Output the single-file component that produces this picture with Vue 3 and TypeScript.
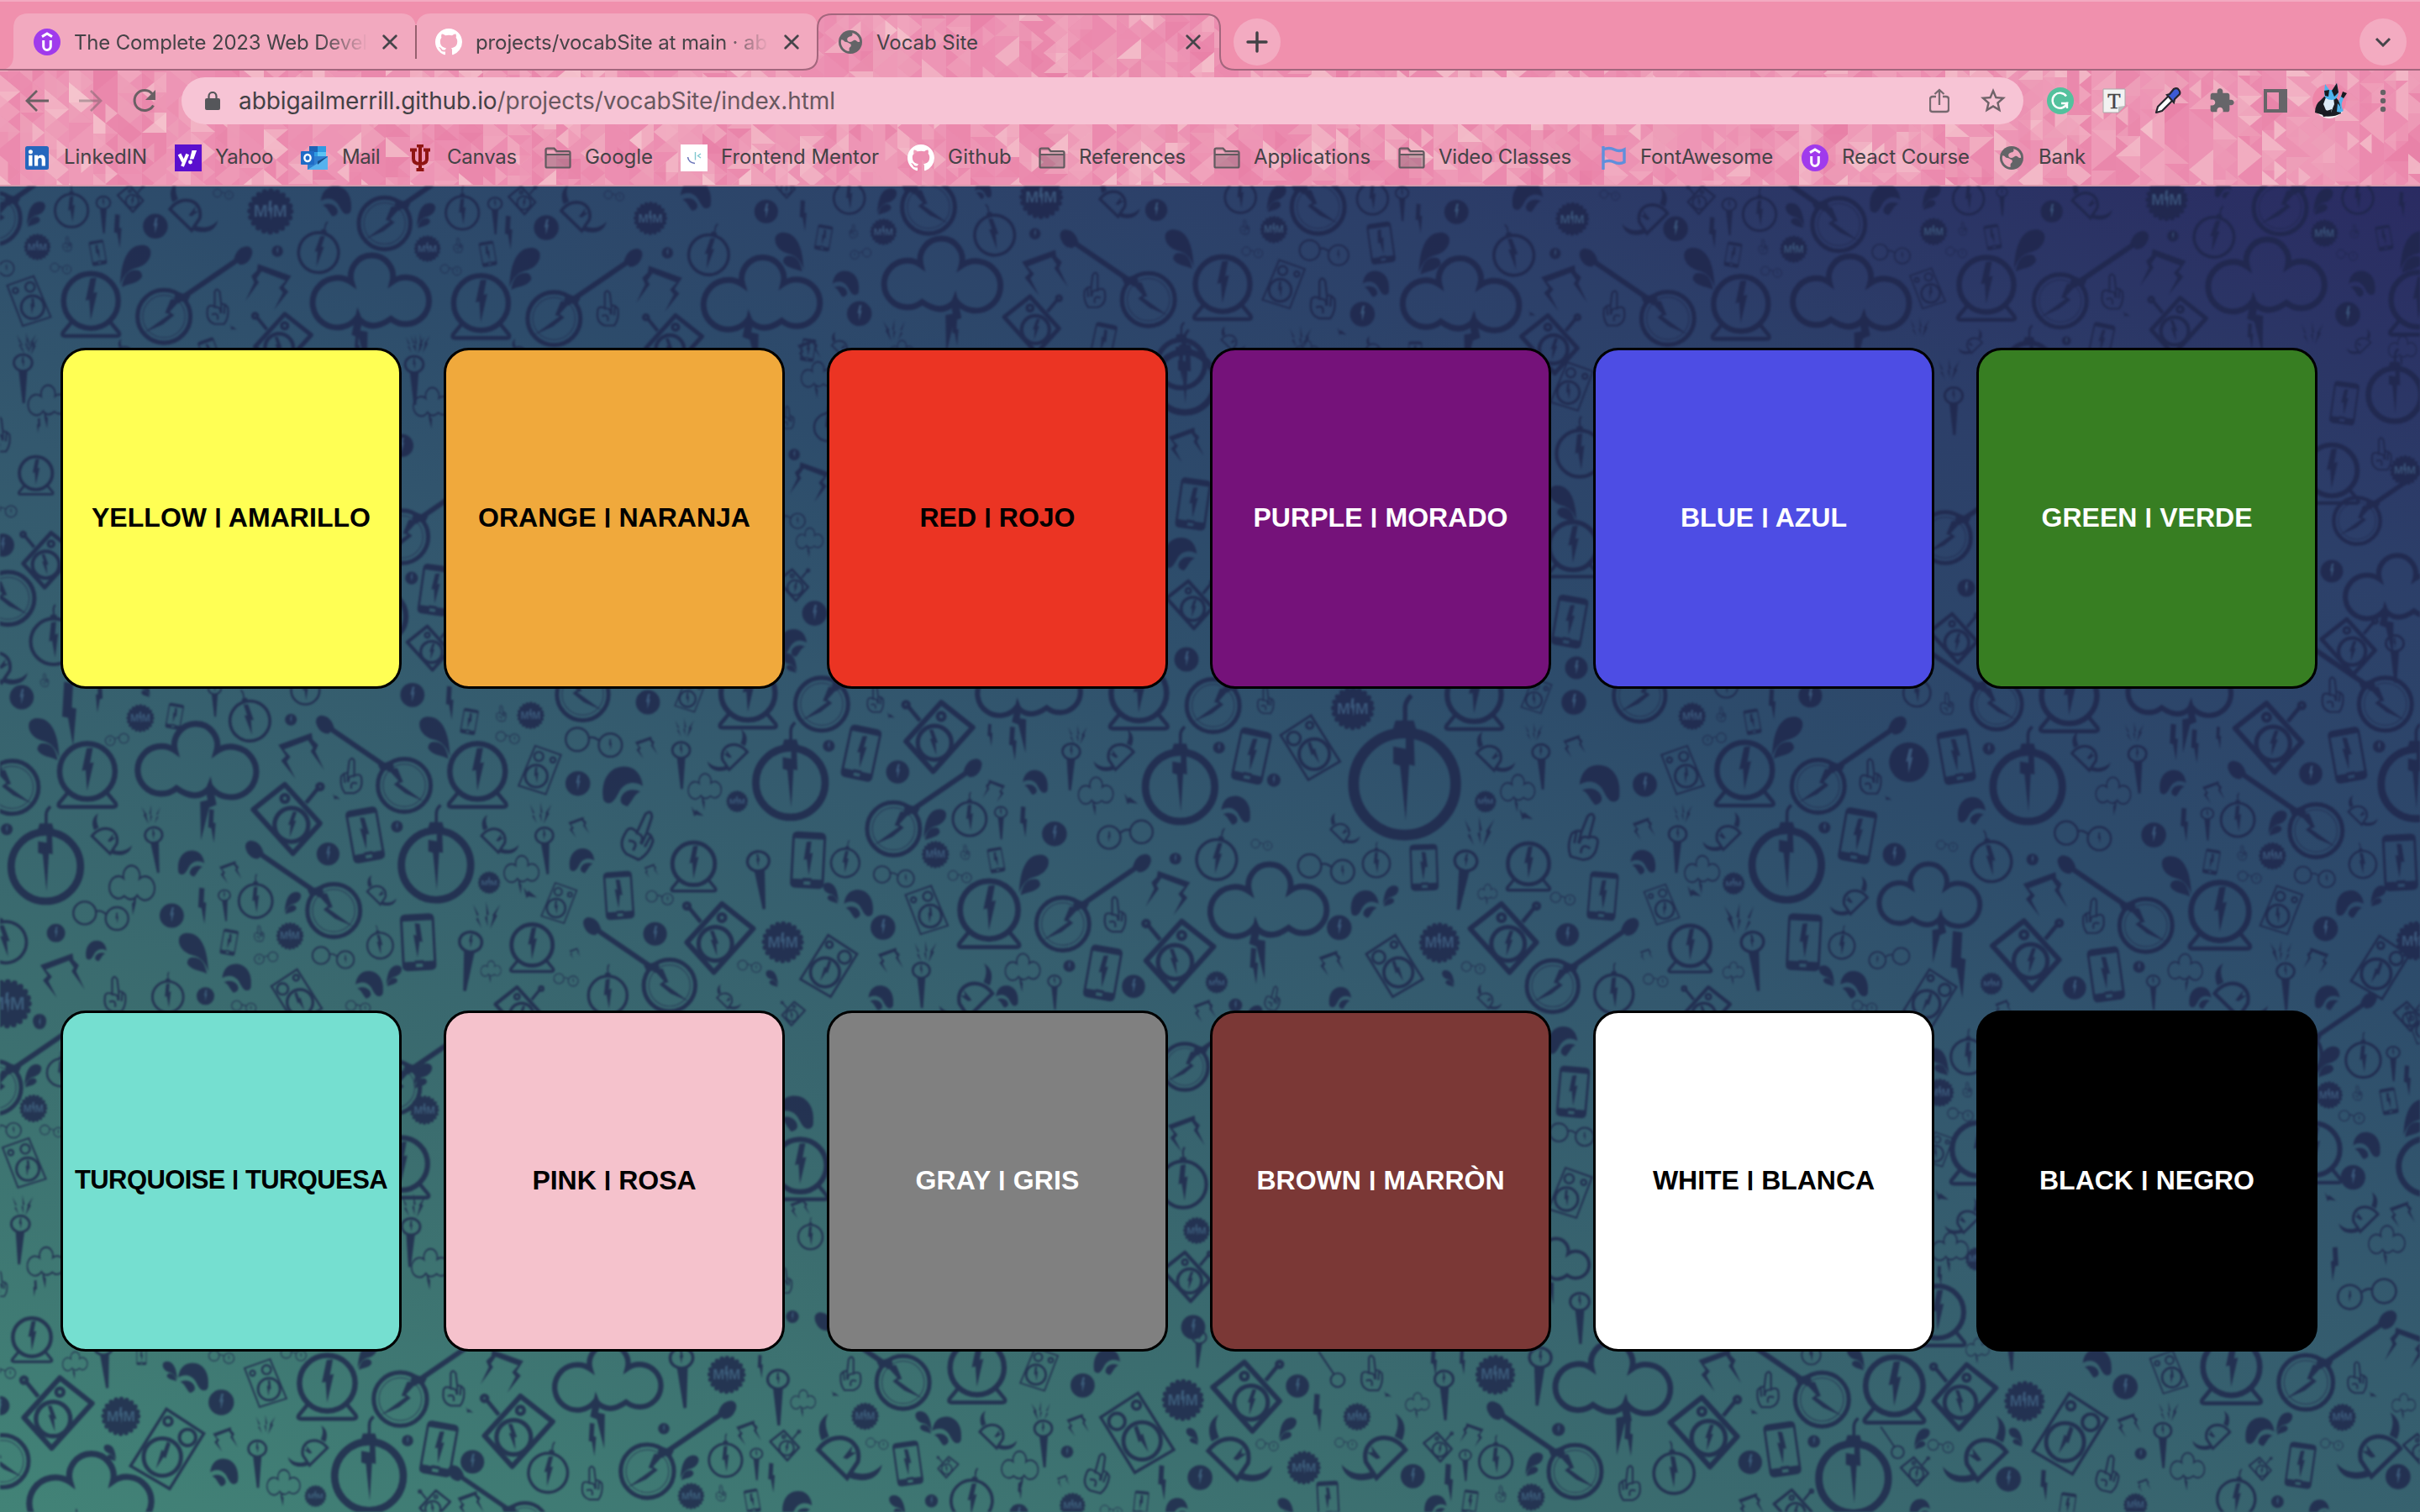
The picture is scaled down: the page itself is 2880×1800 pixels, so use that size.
<script setup lang="ts">
import type { Directive } from 'vue'

interface Bookmark { label: string; icon: string; width: number; gap: number; text: number; size: number }
interface Card { first: string; second: string; bg: string; fg: string; text: number }
interface Doodle { id: string; transform: string }
interface Band { ox: number; oy: number; sx: number; sy: number; from: number; to: number; items: string }

/* Spreads a label over the given width by adjusting its tracking. */
const vFit: Directive<HTMLElement, number> = {
  mounted(el, { value }) {
    const count = (el.textContent ?? '').length
    const natural = el.getBoundingClientRect().width
    el.style.letterSpacing = `${((value - natural) / count).toFixed(3)}px`
  },
}

const bookmarks: Bookmark[] = [
  { label: 'LinkedIN', icon: 'linkedin', size: 28, width: 178, gap: 18, text: 99 },
  { label: 'Yahoo', icon: 'yahoo', size: 32, width: 150, gap: 16, text: 69 },
  { label: 'Mail', icon: 'outlook', size: 32, width: 128, gap: 17, text: 45 },
  { label: 'Canvas', icon: 'trident', size: 28, width: 162, gap: 18, text: 83 },
  { label: 'Google', icon: 'folder', size: 32, width: 162, gap: 16, text: 81 },
  { label: 'Frontend Mentor', icon: 'mentor', size: 32, width: 270, gap: 16, text: 188 },
  { label: 'Github', icon: 'github', size: 32, width: 156, gap: 16, text: 76 },
  { label: 'References', icon: 'folder', size: 32, width: 208, gap: 16, text: 127 },
  { label: 'Applications', icon: 'folder', size: 32, width: 220, gap: 16, text: 139 },
  { label: 'Video Classes', icon: 'folder', size: 32, width: 242, gap: 16, text: 158 },
  { label: 'FontAwesome', icon: 'flag', size: 30, width: 238, gap: 16, text: 158 },
  { label: 'React Course', icon: 'udemy', size: 32, width: 236, gap: 16, text: 152 },
  { label: 'Bank', icon: 'globe', size: 28, width: 120, gap: 18, text: 56 },
]

const rows: Card[][] = [
  [
    { first: 'YELLOW', second: 'AMARILLO', bg: '#ffff54', fg: '#000', text: 332 },
    { first: 'ORANGE', second: 'NARANJA', bg: '#f0a93c', fg: '#000', text: 324 },
    { first: 'RED', second: 'ROJO', bg: '#eb3423', fg: '#000', text: 185 },
    { first: 'PURPLE', second: 'MORADO', bg: '#75127a', fg: '#fff', text: 303 },
    { first: 'BLUE', second: 'AZUL', bg: '#4d4de4', fg: '#fff', text: 198 },
    { first: 'GREEN', second: 'VERDE', bg: '#377e22', fg: '#fff', text: 251 },
  ],
  [
    { first: 'TURQUOISE', second: 'TURQUESA', bg: '#75dfd0', fg: '#000', text: 372 },
    { first: 'PINK', second: 'ROSA', bg: '#f5c2cc', fg: '#000', text: 195 },
    { first: 'GRAY', second: 'GRIS', bg: '#808080', fg: '#fff', text: 195 },
    { first: 'BROWN', second: 'MARRÒN', bg: '#7b3836', fg: '#fff', text: 295 },
    { first: 'WHITE', second: 'BLANCA', bg: '#fff', fg: '#000', text: 264 },
    { first: 'BLACK', second: 'NEGRO', bg: '#000', fg: '#fff', text: 256 },
  ],
]

/* Mosaic of the browser theme: vertical ribbons folded into chevrons. */
let seed = 7
const rand = () => {
  seed = (seed * 16807) % 2147483647
  return seed / 2147483647
}
const ribbonTints = ['#ea87ac', '#eb8cb0', '#ed96b5', '#ee9cb9', '#e983a9', '#ec92b3']
const foldTints = ['#e87fa6', '#ea88ac', '#ed98b6', '#f0a5bd', '#f1acc1', '#ef9fba', '#eb8db0', '#f3bac8', '#eda0b9', '#f5c6cf']
const pick = (list: string[]) => list[Math.floor(rand() * list.length)]
const mosaic: { points: string; fill: string }[] = []
for (let x = -5; x < 2880; x += 29) {
  mosaic.push({ points: `${x},0 ${x + 29},0 ${x + 29},222 ${x},222`, fill: pick(ribbonTints) })
  const right = rand() > 0.35
  const near = right ? x : x + 29
  const far = right ? x + 29 : x
  const mid = (near + far) / 2
  for (let y = -40 + Math.floor(rand() * 20); y < 230; y += 24) {
    if (rand() > 0.3) mosaic.push({ points: `${near},${y} ${far},${y + 24} ${near},${y + 48}`, fill: pick(foldTints) })
    if (rand() > 0.45) mosaic.push({ points: `${near},${y} ${mid},${y + 12} ${far},${y + 24} ${near},${y + 24}`, fill: pick(foldTints) })
    if (rand() > 0.6) mosaic.push({ points: `${far},${y + 24} ${mid},${y + 36} ${mid},${y + 12}`, fill: pick(foldTints) })
  }
}

/* Doodle bands: origin, units per pixel on both axes, horizontal extent in pixels, then "kind x y height [flip] [angle]". */
const bands: Band[] = [
  {
    ox: 0, oy: 220, sx: 1.0814, sy: 3, from: -200, to: 1442,
    items: `banjo -7 120 200;comma 45 105 90 -1;bombt 92 92 128;mic 133 108 130;bolt 152 165 120;disc 200 148 92;helmet 248 80 180;amp 168 50 100;
    glasses 287 32 32;badge 348 95 165;swirl 432 60 110 -1;bombt 410 242 155 1 14;banjo 495 138 200;watch 231 273 145 1 10;disc 357 237 42;banjo 211 470 205;
    comma 172 290 150 -1;badge 48 222 95;phone 126 243 88 1 -10;hand 87 210 55;glasses 78 298 34;glasses -6 290 60;ball 117 415 212;speaker 38 415 185 -1;
    hand 281 435 130;zig 345 365 165 -1;cloud 475 385 260;amp 364 565 220 -1;sparks 37 575 70;sparks 535 570 70;tick 300 510 22;phone 270 600 100 -1 20;bolt 460 580 80;
    comma 547 110 90 -1;bombt 595 100 128;mic 637 112 130;bolt 655 170 120;disc 703 153 92;helmet 750 86 170;amp 672 56 105;glasses 790 38 32;badge 837 120 120;
    swirl 895 40 110 -1;bombt 912 250 155 1 14;badge 550 228 95;hand 590 215 55;phone 628 247 88 1 -10;glasses 580 303 34;ball 619 422 212;watch 733 282 145 1 10;
    disc 859 243 42;banjo 713 478 205;comma 673 300 150 -1;hand 783 440 130;zig 848 372 165 -1;cloud 978 392 260;amp 867 570 220 -1;disc 986 95 88;
    comma 1018 240 140;swirl 1088 355 95 -1;disc 1106 460 92;phone 1060 190 90 -1 -10;hand 1098 165 50 -1;badge 1137 168 95;glasses 1108 245 34 -1;bombt 1093 48 120;
    comma 1140 60 95 -1;banjo 1195 80 205 -1;badge 1340 45 155;bombt 1280 180 155 -1 14;disc 1332 175 42;banjo 1478 410 205 -1;cloud 1215 325 260 -1;zig 1345 315 165;
    hand 1408 375 130 -1;amp 1328 500 215;watch 1457 215 145 -1 10;comma 1520 230 140;sparks 1150 520 80 -1;bolt 1230 525 100;helmet 1440 45 150 1;disc 1488 90 82;
    bolt 1034 110 110;phone 1420 560 130 -1 -12;bombx 1520 640 190;helmet 1085 570 90;puff 1160 590 70;phone 1040 590 80 1 8;helmet 165 590 80;helmet 672 590 80;swirl 1265 22 60 -1;amp 1010 10 80`,
  },
  {
    ox: 1430, oy: 220, sx: 1.0814, sy: 3, from: 1442, to: 3000,
    items: `bombt 50 45 120;comma 95 50 95 -1;banjo 150 80 205 -1;bombt 220 50 120;mic 258 70 120;bolt 280 120 105;disc 328 97 90;swirl 420 45 110;badge 477 122 120;
    helmet 572 95 170 -1;amp 643 55 105 -1;disc 610 157 92;glasses 525 36 32;mic 679 115 130;bombt 718 105 128;bolt 658 170 110;comma 765 110 90;banjo 820 142 205 -1;
    swirl 880 55 110;badge 942 167 98;hand 723 220 55;phone 684 250 88 -1 -10;badge 762 230 98;glasses 733 310 34;bombt 402 252 155 -1 14;disc 455 245 42;
    hand 56 150 55;badge 93 160 98;glasses 65 240 34;glasses 157 240 80;phone 231 208 145 1 -8;comma 297 245 150 -1;ball 27 355 212;speaker 105 355 180;
    hand 157 405 150;swirl 224 355 95 -1;disc 207 462 92;cloud 336 395 260 -1;zig 467 370 165;banjo 600 477 205 -1;watch 580 283 145 -1 10;hand 530 440 130 -1;
    comma 643 300 150;ball 694 425 212;cloud 838 388 260 -1;amp 448 570 220;tick 425 460 22;glasses 887 245 62;speaker 935 370 150 -1;ball 1010 357 212;banjo 1105 415 205;
    watch 1123 218 145 1 10;disc 1250 183 42;comma 1063 235 150 -1;bombt 987 50 120;comma 938 45 90 -1;disc 1094 95 82;helmet 1145 50 150;badge 1242 55 150;
    bombt 1303 187 155 1 14;banjo 1388 82 205;swirl 1315 20 60;comma 1442 60 95 -1;hand 1173 380 130;zig 1237 312 165 -1;cloud 1368 328 260;amp 1257 505 215 -1;
    badge 1445 173 98;hand 980 155 50;phone 1018 187 88 1 -10;glasses 971 240 34;bombt 1488 48 120;phone 1522 190 88 1 -10;glasses 1474 250 34;hand 1484 165 50;
    swirl 1493 355 95 -1;disc 1475 463 92;ball 1566 410 212;comma 1560 240 150 -1;sparks 1430 530 80;phone 1158 560 130 1 12;disc 1113 557 34;bombx 1065 650 190;
    sparks 128 545 80;helmet 40 550 90;puff 135 590 70;tick 180 525 30;helmet 225 580 80;phone 275 600 80;sparks 925 510 70;helmet 990 560 90 -1;bolt 1350 540 90;helmet 1490 560 90 -1;puff 1545 580 80;bolt 1545 70 90;mic 1030 60 100;tick 1190 462 22`,
  },
  {
    ox: 0, oy: 800, sx: 1.742, sy: 3, from: -200, to: 898,
    items: `disc 45 90 90;hand 93 28 50;bolt 145 150 230;bolt 205 90 110 -1;comma 95 240 150;watch -5 215 145;banjo 25 412 205 -1;ball 181 355 215;badge 291 165 100;
    phone 362 158 90 -1 -10;glasses 243 240 38 -1;cloud 412 320 265 -1;bombt 518 175 155 -1 14;disc 603 170 44;zig 625 300 165;banjo 838 405 205 -1;watch 805 208 150 -1 10;
    bombt 633 65 110;hand 727 370 130 -1;amp 595 525 262;tick 697 446 24;phone 757 582 190 -1 10;disc 680 650 85;bombx 95 695 275;disc 14 562 44;helmet 230 580 150;
    sparks 312 510 70 -1;mic 323 637 162 -1 8;swirl 397 685 95;bolt 440 550 120;puff 275 755 130 -1;zig 478 715 80;banjo 692 852 205 -1;bombt 530 818 130;mic 467 835 110 -1 5;
    bolt 420 835 130;comma 605 825 80 -1;glasses 208 868 90;disc 356 870 90;bombt 12 965 160 -1 14;disc 116 932 68;swirl 200 997 75;watch 307 995 150 -1 10;comma 405 1005 145;
    badge 601 943 98;hand 538 933 60;phone 475 965 90 -1 -10;glasses 552 1020 38 -1;glasses 690 1018 68;bombt 788 977 100 -1 10;zig 130 1085 160;badge 15 1185 175;
    hand 240 1150 130;bombt 348 1160 120;disc 426 1157 66;swirl 490 1095 105 -1;speakerb 615 1160 200;swirl 765 1118 100 -1;comma 815 1085 75 -1;watch 873 1185 130 1 8;
    phone 867 965 202 -1 3;helmet 790 780 110;bombx 904 690 275;disc 823 552 44;helmet 1035 580 140;sparks 1122 505 80;mic 1132 640 165 -1 6;puff 1080 705 100;
    zig 1200 555 75;swirl 1207 675 90;badge 1014 752 80;tick 1098 790 44;ball 990 355 215;comma 905 235 150;disc 855 82 90;phone 973 177 90 -1 -10;hand 1040 147 60;
    badge 1100 155 98;banjo 1208 80 200 -1;disc 1343 108 90;speaker 1430 80 130;glasses 1052 233 38;speaker 1118 350 180;glasses 1230 248 92;disc 1198 398 92;zig 1340 270 80;
    swirl 1292 410 145;hand 1330 580 180 1 25;sparks 1420 200 70;mic 1412 335 165;helmet 1510 280 150 -1;puff 1460 410 95;badge 1528 462 78;ball 1438 685 165;
    phone 1283 798 170 -1 4;speaker 1158 825 150;glasses 1367 805 44;zig 1350 710 50;banjo 1388 1120 200 -1;ball 1103 975 160;mic 970 1035 210 1 8;sparks 1010 870 100;
    amp 1492 950 260 -1;disc 1358 935 88;puff 1017 1060 58;glasses 1173 1098 40;zig 1192 1005 40;bombt 1260 1155 150;amp 1075 1210 180;helmet 1510 1160 90;tick 1445 500 40;
    bolt 933 110 120;comma 300 60 60;mic 445 100 120;glasses 505 1195 40;glasses 742 1195 40;disc 82 1245 50`,
  },
  {
    ox: 860, oy: 800, sx: 1.4255, sy: 3, from: 884, to: 1925,
    items: `ball 43 75 210;banjo 168 115 205;hand 260 95 100;amp 367 232 262 -1;tick 285 155 24;cloud 517 45 230;ball 706 75 215;banjo 832 120 205;hand 922 100 100;badge 1069 130 155;
    ball 1275 80 210;speaker 1380 85 130;disc 1444 108 92;bombx 115 395 275;disc 180 264 44;phone 235 290 190 1 12;disc 297 357 86;bolt 454 225 80;bolt 493 255 120;
    banjo 290 560 205;bombt 419 525 130;swirl 530 395 90 -1;zig 460 425 80 -1;sparks 603 225 70;mic 590 340 165 1 3;helmet 665 280 150 -1;puff 632 425 100;tick 692 455 44;
    glasses 684 578 90 -1;comma 358 545 110 -1;mic 472 540 115;bolt 511 535 110;disc 563 578 92;badge 361 652 98;hand 412 642 55;phone 464 672 88 1 -10;
    glasses 402 730 38;bombt 208 682 110 1 8;phone 145 672 200 1 3;glasses 290 728 66;comma 525 725 145 -1;watch 601 703 150 1 10;banjo 577 900 205;disc 768 667 44;
    bombx 776 410 275;phone 897 300 190 1 12;disc 842 270 44;speakerb 997 270 235;disc 935 386 50;swirl 870 495 105 -1;bombt 838 670 155 1 12;watch 967 530 150 1 8;glasses 914 616 34;
    bombx 1157 400 405;helmet 1055 558 110;cloud 923 820 260;zig 755 790 160 -1;hand 667 865 130;glasses 1023 700 92;bombt 1109 685 105;phone 1190 698 165 -1 2;sparks 1285 570 110;
    mic 1255 745 210 1 10;ball 1367 685 160;hand 1462 585 175 -1 -15;badge 1294 463 78;puff 1348 415 98;helmet 1310 285 145;sparks 1377 215 65;mic 1390 340 160 -1 4;zig 1445 265 80;
    glasses 1520 255 90 -1;swirl 1487 405 145 -1;tick 1362 510 44;amp 775 1015 265 -1;phone 645 1075 190 1 10;disc 588 1050 44;disc 697 1123 86;badge 838 1108 80;bolt 902 1050 130;
    puff 508 1055 100;ball 452 850 225;speaker 347 850 180 -1;mic 65 745 205 -1 8;swirl 230 830 105 -1;comma 185 790 75;watch 143 848 90;disc 272 912 92;badge 102 965 150;
    speakerb 180 1050 225 -1;zig 285 1030 90;comma 85 1095 60;sparks 345 1000 80;mic 337 1120 160;helmet 415 1140 200 -1;swirl 268 1165 90 -1;swirl 482 1160 80 -1;mic 563 1145 120;
    hand 935 1165 90 1 15;zig 1033 1040 90;swirl 1048 1165 80;speakerb 1140 1050 225;badge 1216 967 145;swirl 1090 830 100;comma 1132 800 75 -1;watch 1174 850 90;
    disc 1046 913 92;comma 1232 1095 60;puff 1297 785 55;glasses 1425 808 40;phone 1493 800 170 1 5;amp 1325 950 260;banjo 1408 1122 200;disc 1433 938 86;bombt 1512 1150 150;
    helmet 1300 1160 90;glasses 45 1050 38;glasses 1273 1055 38;amp 120 1220 90 -1;disc 870 1190 50;zig 818 1210 80`,
  },
  {
    ox: 1900, oy: 800, sx: 1.6, sy: 3, from: 1925, to: 3000,
    items: `banjo 82 85 200 1;badge 182 158 98;hand 238 150 55;phone 297 178 88 1 -10;bolt 335 115 110;disc 407 85 88;bombt 247 50 90;bombt 610 75 105;hand 668 112 80;banjo 762 115 195 -1;
    ball 900 85 215;cloud 1113 45 230 -1;amp 1280 235 262;hand 1403 80 130;banjo 1502 115 205 -1;speaker 165 350 180 -1;glasses 225 238 38 -1;ball 282 350 215;
    comma 360 235 150 -1;watch 452 210 148 1 10;banjo 422 408 205;disc 595 322 148;hand 523 372 130;phone 685 302 190 -1 10;disc 747 274 46;bombx 821 410 275;helmet 940 285 145;
    sparks 1025 215 70;mic 1032 350 168 -1 4;bolt 1100 250 130;bolt 1140 265 120;bolt 1185 235 80;disc 1360 363 86;phone 1430 297 190 -1 10;disc 1490 266 46;bombx 1560 400 275;
    puff 985 425 100 -1;swirl 1098 398 95;zig 1175 430 80;banjo 1370 567 205 -1;bombt 1221 528 130;mic 1163 545 115;bolt 1120 545 120;comma 1295 540 90 -1;helmet 1458 495 110;
    disc 92 402 90;sparks 165 505 70;zig 90 560 80;mic 153 635 165 1 3;helmet 240 570 140 -1;puff 200 705 100;swirl 88 680 90 -1;badge 261 755 80;
    bombx 362 690 275;disc 434 556 44;phone 497 585 190 1 10;disc 567 652 86;watch 608 535 150 -1 8;swirl 715 497 100;glasses 667 620 34;bombt 752 677 155 -1 12;disc 830 670 44;
    glasses 925 582 92;disc 1061 582 92;badge 1287 657 98;hand 1230 645 55;phone 1171 678 88 -1 -10;glasses 1243 732 38;bombt 1459 687 105 -1 8;phone 1530 680 200 -1 3;
    glasses 1367 730 66;comma 1108 730 145;watch 1018 708 150 -1 8;banjo 1046 905 205 -1;cloud 637 800 225 -1;zig 855 795 160;hand 945 870 130 -1;amp 818 1012 262;
    bolt 690 1045 240;ball 1187 855 225;speaker 1303 850 180;disc 1388 917 92;swirl 1435 830 100;comma 1487 800 75 -1;watch 1530 852 90;phone 395 965 202 1 3;sparks 270 880 110 -1;
    mic 302 1035 210 -1 8;ball 178 978 158;bombt 467 978 100 1 6;helmet 482 800 140 -1;glasses 558 1020 66 -1;swirl 490 1118 100 -1;comma 440 1085 75;watch 393 1190 130;
    speakerb 635 1165 210 -1;badge 752 1113 80;phone 970 1080 190 -1 8;disc 910 1128 86;disc 1033 1053 44;puff 1122 1055 98 -1;mic 1060 1145 120;sparks 1302 1000 80 -1;
    mic 1312 1125 165;zig 1370 1030 90 -1;helmet 1225 1140 200;swirl 1150 1165 80;swirl 1392 1165 90;speakerb 1492 1055 230 -1;badge 1560 960 140;
    speaker 125 830 150 -1;glasses 112 1100 40;zig 95 1010 45;puff 260 1065 60;amp 210 1210 180 -1;tick 185 785 44;tick 555 450 22;
    glasses 510 1195 40;zig 775 1200 60;amp 1545 1230 110`,
  },
  {
    ox: 0, oy: 220, sx: 1.568, sy: 2.529, from: -200, to: 3000,
    items: `sparks 50 475 60;mic 43 585 145;puff 88 650 95;bolt 72 725 45 -1;hand 0 750 110;ball 67 868 108;glasses 5 978 38;disc 5 1085 72;amp 92 1130 175 -1;banjo 15 1245 172 -1;
    bombt 100 1375 150;helmet 5 1430 150;sparks 785 478 60;mic 773 590 145;puff 805 655 90;disc 750 785 72;watch 783 893 125;banjo 750 1060 172;
    disc 768 1184 40;phone 812 1220 150 1 8;bombx 710 1300 170;amp 800 1395 140;
    zig 1510 500 70;puff 1525 572 80;hand 1470 700 70;bombt 1545 730 90;disc 1482 812 36;zig 1510 895 120 -1;glasses 1468 1005 50;puff 1510 1065 65;amp 1480 1205 100;disc 1520 1290 78;swirl 1480 1380 85;comma 1475 1440 60`,
  },
  {
    ox: 0, oy: 0, sx: 1, sy: 1, from: -200, to: 3000,
    items: `bombx 1410 455 80;zig 1412 530 42;phone 1420 600 60 1 8;swirl 1405 660 40;amp 1416 720 60;disc 1412 785 30;
    speaker 1870 460 60;bombt 1880 540 60;comma 1862 600 44;ball 1872 650 62;phone 1868 740 60 1 10;disc 1876 795 28;
    sparks 2320 440 26;mic 2325 490 56;watch 2320 560 54;banjo 2315 640 66;disc 2340 700 22;amp 2325 760 62;
    ball 2775 560 66;bombx 2850 470 70;banjo 2805 620 60;badge 2862 560 36;phone 2790 480 50 1 8;cloud 2850 700 76;disc 2775 680 28;amp 2795 770 70;mic 2850 785 56;hand 2835 540 40;
    banjo 1410 1270 60;zig 1412 1350 44;bombt 1408 1410 60;badge 1424 1465 32;amp 1412 1520 62;disc 1420 1580 30;
    swirl 1860 1240 36;phone 1872 1300 60 1 5;glasses 1870 1350 24;speaker 1868 1420 62;cloud 1850 1500 50;mic 1880 1570 60`,
  },
  {
    ox: 0, oy: 1180, sx: 1.633, sy: 2.529, from: -200, to: 975,
    items: `disc 77 95 40;banjo -10 290 172;comma 62 255 70 -1;bombt 118 245 90;badge 65 353 84;glasses 5 412 50;glasses 100 420 32;speaker 48 517 155 -1;sparks 45 645 65;mic 38 750 145 1 3;
    puff 88 815 90;bolt 68 895 50 -1;ball 62 1042 125;hand 0 880 80;comma 820 255 75 -1;banjo 765 290 172;badge 825 358 88;ball 780 520 172;sparks 805 645 75;mic 797 758 145 1 3;puff 835 820 90;watch 805 1060 125;
    swirl 1545 370 110 -1;ball 1555 525 172;zig 1555 655 60;bombt 1575 740 80;hand 1525 870 80;disc 1540 980 40;
    puff 145 1115 60;mic 205 1120 150 -1 6;phone 275 1100 50;watch 282 1185 78;comma 332 1145 60;swirl 375 1165 92 -1;disc 430 1238 80;speaker 517 1180 150 -1;ball 636 1180 182;
    comma 712 1100 80 -1;banjo 778 1228 174;hand 883 1195 110;zig 975 1145 130 -1;cloud 1178 1165 200;mic 1328 1165 180 -1 5;badge 1412 1155 115;amp 112 1270 225 -1;badge 235 1280 118;
    speakerb 325 1378 245 -1;zig 438 1350 75;sparks 517 1305 60;helmet 600 1370 125 -1;tick 912 1262 20;phone 853 1378 160 1 10;disc 792 1353 36;disc 918 1417 74;amp 1007 1325 225 -1;
    bolt 1152 1350 100;mic 1512 1225 165;bombx 717 1460 230;mic 500 1425 140;puff 550 1480 80;swirl 435 1450 85 -1;badge 613 1520 66;banjo 5 1415 170 -1;comma 215 1390 50;
    cloud 172 1510 230;watch 370 1540 100;bombt 1065 1450 128 1 10;hand 1152 1480 105;banjo 1258 1445 174;disc 1290 1317 36;bombt 1410 1412 108;comma 1338 1435 75 -1;mic 1470 1425 95;
    badge 1343 1520 80;bolt 1500 1465 90;amp 1525 1368 95;zig 1455 1330 75;hand 1402 1510 50;phone 1462 1535 70 1 -10;swirl 1550 1550 90;banjo 1020 1610 150 -1;zig 915 1545 80;
    amp 845 1550 100 -1;glasses 430 1100 35;glasses 570 1092 35;bolt 1478 1130 70;disc 0 1248 60;glasses 5 1145 35;puff 1560 1230 60`,
  },
  {
    ox: 900, oy: 1600, sx: 1.568, sy: 3, from: 975, to: 1885,
    items: `hand 175 105 125 -1;banjo 274 137 205 -1;ball 412 85 210;speaker 527 90 160;swirl 655 65 95;watch 751 85 88;mic 825 20 130 1 5;disc 609 148 90;
    badge 796 200 150;speakerb 711 317 290;tick 147 178 24;badge 203 258 98;helmet 172 368 240;swirl 355 312 105 -1;comma 314 280 80;
    helmet 450 308 140;sparks 530 240 70 -1;mic 537 358 165 -1 3;zig 600 290 80;phone 283 427 155 -1 8;puff 493 435 105 -1;disc 580 385 46;
    glasses 225 355 36;amp 358 440 80 -1;hand 640 460 145 1 15;bombt 402 560 160 1 8;watch 145 595 140;disc 327 560 48;badge 590 577 92;zig 573 490 45;bolt 492 525 60;
    amp 915 188 262;disc 1010 150 86;comma 990 305 85 -1;helmet 900 372 240;comma 815 330 60;disc 828 477 92;bolt 758 495 125;badge 1022 442 120;glasses 953 360 36;watch 873 595 130;
    phone 1067 555 130 -1 3;swirl 785 590 80;spoon 1070 90 130 -1;hand 1150 103 130;tick 1178 180 24;puff 1233 208 68;badge 1379 110 142;badge 1121 260 98;mic 1285 185 175 -1 3;
    mic 1460 118 205 1 5;bolt 1048 245 135;bolt 1265 65 100;bolt 1318 65 90;helmet 1155 368 240 -1;amp 1272 368 110;zig 1335 325 85 -1;disc 1497 305 48;banjo 1528 455 205 -1;
    bombt 1380 420 128;mic 1323 435 110;comma 1450 430 85 -1;disc 1225 472 90;bolt 1293 495 135;badge 1446 547 98;hand 1390 533 60;phone 1332 565 85 1 8;bombx 1545 148 200;glasses 1100 355 36;
    watch 1183 590 135;swirl 1268 580 80;phone 718 568 85 -1 -6;glasses 662 595 36;disc 490 605 70;comma 265 580 80;comma 990 590 80`,
  },
  {
    ox: 1880, oy: 1160, sx: 1.568, sy: 2.45, from: 1898, to: 3000,
    items: `bombt 725 240 110;comma 672 255 80;badge 672 345 82;hand 724 335 45;glasses 710 408 34;speaker 668 510 105;ball 745 510 170;tick 675 645 35;helmet 715 705 105 -1;
    puff 690 795 85;bolt 672 880 60;badge 742 830 70;ball 668 985 165;puff 742 1088 55;banjo 1340 235 150;bombt 1462 250 110;mic 1518 262 100;bolt 1545 310 90;comma 1395 255 90 -1;badge 1398 352 80;
    hand 1452 345 45;phone 1510 370 76 1 -10;glasses 1440 415 34;ball 1370 510 165;swirl 1468 500 80 -1;disc 1443 592 75;bombx 1580 560 180;comma 1560 420 110 -1;tick 1400 650 30;
    helmet 1455 695 120 -1;zig 1535 700 75;puff 1505 775 85;bolt 1408 845 100 -1;glasses 1470 930 78 -1;watch 1392 1030 130;banjo 1355 1190 172;speaker 1572 150 110 -1;
    cloud 65 1180 210 -1;zig 262 1155 125;hand 350 1210 108 -1;banjo 452 1240 170 -1;ball 587 1200 182;comma 517 1120 70;amp 718 1232 200 -1;badge 830 1245 118;mic 805 1100 110 -1 4;
    watch 878 1150 75;swirl 965 1135 85 -1;speaker 1100 1160 130 -1;disc 1018 1203 76;ball 1216 1145 180;hand 1452 1175 95;zig 1540 1090 120 -1;tick 1480 1225 20;puff 1537 1250 55;
    amp 232 1335 215;tick 325 1275 20;bolt 92 1350 110;phone 378 1385 155 -1 8;disc 437 1362 38;disc 318 1423 72;bombx 511 1470 225;hand 92 1483 105 -1;bombt 176 1455 128 -1 5;
    spoon 580 1365 95 -1;comma 637 1355 62 -1;glasses 673 1375 34;helmet 740 1385 195 -1;comma 815 1350 55;speakerb 915 1340 240 -1;zig 1025 1315 70;sparks 1100 1275 60;mic 1088 1375 130;
    helmet 1180 1330 115 -1;swirl 1270 1335 85;comma 1313 1310 65 -1;badge 1423 1292 80;helmet 1475 1375 195 -1;glasses 1403 1370 30;phone 1345 1432 130 1 8;disc 1047 1398 36;puff 1133 1435 80;
    amp 625 1450 88;hand 988 1455 110 1 12;disc 800 1472 76;bolt 867 1490 90;amp 1270 1442 70;zig 1053 1490 40;bombt 1225 1530 120 1 8;disc 1527 1465 76;badge 1037 1548 70;phone 910 1550 75 1 8;
    amp 398 1560 120;watch 755 1560 95;zig 320 1550 75;watch 1485 1558 90;swirl 635 1560 60;disc 1302 1538 38;swirl 1380 1562 60;amp 1565 1385 95;bombt 432 1110 60`,
  },
]

const doodles: Doodle[] = bands.flatMap(({ ox, oy, sx, sy, from, to, items }) =>
  items.split(';').flatMap((entry) => {
    const [id, x, y, h, flip = '1', angle = '0'] = entry.trim().split(/\s+/)
    const s = Number(h) / sy / 100
    const px = ox + Number(x) / sx
    const py = oy + Number(y) / sy - 222
    if (px < from || px >= to) return []
    return [{
      id: `#d-${id}`,
      transform: `translate(${px.toFixed(1)} ${py.toFixed(1)}) scale(${(s * Number(flip)).toFixed(3)} ${s.toFixed(3)}) rotate(${angle})`,
    }]
  }),
)
</script>

<template>
  <svg class="defs" aria-hidden="true">
    <defs>
      <symbol id="i-udemy" viewBox="0 0 32 32">
        <circle cx="16" cy="16" r="16" fill="#a03aec" />
        <path d="M10 9.600 16 6l6 3.600M11.700 14v7.200a4.300 4.300 0 0 0 8.600 0V14" fill="none" stroke="#fff" stroke-width="3" />
      </symbol>
      <symbol id="i-github" viewBox="0 0 16 16">
        <path fill="#fff" d="M8 0C3.580 0 0 3.580 0 8c0 3.540 2.290 6.530 5.470 7.590.4.070.55-.17.55-.38 0-.19-.01-.82-.01-1.490-2.010.37-2.530-.49-2.690-.94-.09-.23-.48-.94-.82-1.130-.28-.15-.68-.52-.01-.53.63-.01 1.080.58 1.230.82.72 1.210 1.870.87 2.330.66.07-.52.28-.87.51-1.070-1.780-.2-3.640-.89-3.640-3.950 0-.87.31-1.590.82-2.150-.08-.2-.36-1.020.08-2.120 0 0 .67-.21 2.200.82.64-.18 1.320-.27 2-.27s1.360.09 2 .27c1.530-1.040 2.200-.82 2.200-.82.44 1.100.16 1.920.08 2.120.51.56.82 1.270.82 2.150 0 3.070-1.870 3.750-3.650 3.950.29.25.54.73.54 1.480 0 1.070-.01 1.930-.01 2.200 0 .21.15.46.55.38A8.010 8.010 0 0 0 16 8c0-4.420-3.580-8-8-8" />
      </symbol>
      <symbol id="i-globe" viewBox="2 2 20 20">
        <circle cx="12" cy="12" r="10" fill="#636467" />
        <path fill="#efa6bd" d="M11 19.930c-3.950-.49-7-3.850-7-7.930 0-.62.08-1.210.21-1.790.8-.5 1.800.1 2.500 1.100 1 1.200 2.300.5 3.300 1.200 1.200.9 2.600.8 2.600 2.200 0 1.800-1.600 1.600-1.600 3.200zM9.300 9.800c0-2 1.800-2.400 3.200-2.700 1.300-.3 1.600-1.600 1-2.800 3.500.6 6.200 3.600 6.500 7.300-.9.900-2.300.3-2.900-.6-.8-1.200-2.600-.4-3.600.4-1.300 1-4.200.6-4.200-1.600z" />
      </symbol>
      <symbol id="i-linkedin" viewBox="0 0 28 28">
        <rect width="28" height="28" rx="2.500" fill="#2667bd" />
        <circle cx="6.400" cy="6.800" r="2.500" fill="#fff" />
        <path fill="#fff" d="M4.200 10.800h4.300v12.700H4.200zM11 10.800h4.100v1.800c.8-1.400 2.200-2.200 4-2.200 4 0 4.800 2.700 4.800 6.100v7h-4.200v-6.300c0-1.600-.1-3.300-2.100-3.300s-2.400 1.600-2.400 3.200v6.400H11z" />
      </symbol>
      <symbol id="i-yahoo" viewBox="0 0 32 32">
        <rect width="32" height="32" fill="#5a0fce" />
        <path d="m5.500 11.500 4.600 9M15.200 11.500 9 26" stroke="#fff" stroke-width="4" />
        <path d="M20.500 7h5.600l-3.700 10.500h-4.600z" fill="#fff" />
        <circle cx="18.500" cy="21" r="2.400" fill="#fff" />
      </symbol>
      <symbol id="i-outlook" viewBox="0 0 32 32">
        <path d="M10 2h20v14H10z" fill="#2f9ae3" /><path d="M10 2h10v7H10z" fill="#1d62b5" /><path d="M20 9h10v7H20z" fill="#5bc3f3" />
        <path d="M8 14h24v16H8z" fill="#2f7fd0" /><path d="m8 30 24-15v15z" fill="#55b2ee" /><path d="m20 20 12-6-12 10z" fill="#174a86" />
        <rect x="0" y="8" width="16" height="16" rx="1" fill="#1f6cc7" />
        <ellipse cx="8" cy="16" rx="3.600" ry="4" fill="none" stroke="#fff" stroke-width="2.400" />
      </symbol>
      <symbol id="i-trident" viewBox="0 0 28 32">
        <path d="M10 1.500h8M14 1v30M9.500 30h9M2 6.500h8M18 6.500h8M6 6v11q0 6 8 6t8-6V6" fill="none" stroke="#8f1512" stroke-width="4" />
      </symbol>
      <symbol id="i-folder" viewBox="0 0 32 32">
        <path d="M1.500 26V6.500q0-2 2-2h8l3 3.500h14q2 0 2 2V26q0 1.500-1.500 1.500H3q-1.500 0-1.500-1.500z" fill="#6b6468" fill-opacity=".32" stroke="#625a5f" stroke-width="2.200" />
        <path d="M2 12h28" stroke="#625a5f" stroke-width="2" />
        <path d="M3 7h8l3 3.500h15V11H3z" fill="#f0a8be" />
      </symbol>
      <symbol id="i-mentor" viewBox="0 0 32 32">
        <rect width="32" height="32" fill="#fff" />
        <path d="M8.500 15q1 6.500 8.500 7.500" fill="none" stroke="#6a74b8" stroke-width="1.600" />
        <path d="M17.500 9v9.500M24 11l-3.500 2.500L24 16" fill="none" stroke="#7fc7cf" stroke-width="1.400" />
      </symbol>
      <symbol id="i-flag" viewBox="0 0 30 28">
        <path d="M2 1v26M2 4q7-3 13 0t12 0v15q-6 3-12 0t-13 0" fill="none" stroke="#5f8fdc" stroke-width="3.400" stroke-linecap="round" />
      </symbol>
      <symbol id="i-close" viewBox="0 0 16 16"><path d="m1.500 1.500 13 13m0-13-13 13" stroke="#45454a" stroke-width="2.400" stroke-linecap="round" /></symbol>

      <polygon id="d-zap" points="-5,-38 5,-40 3,-14 9,-16 3,32 -3,-2 -9,0" />
      <g id="d-bombx">
        <circle r="45" fill="none" stroke="currentColor" stroke-width="9.500" />
        <path d="M-11-46-8-56H8L11-46z" />
        <path d="M0-54C2-64-3-70 6-78" fill="none" stroke="currentColor" stroke-width="4" />
        <polygon points="1,-44 8,-44 9,-16 4,-17 1,32 -4,-16 -10,-18 -10,-33 1,-31" />
      </g>
      <g id="d-bombt">
        <circle r="46" fill="none" stroke="currentColor" stroke-width="7" />
        <path d="M-7-46-6-54H6L7-46z" />
        <path d="M0-52C2-60-4-64 3-74" fill="none" stroke="currentColor" stroke-width="3.500" />
        <use href="#d-zap" />
      </g>
      <g id="d-ball">
        <circle r="46" fill="none" stroke="currentColor" stroke-width="9" />
        <path d="M-33 36-47 53q-3 6 4 6h86q7 0 4-6L33 36" fill="none" stroke="currentColor" stroke-width="6.500" />
        <use href="#d-zap" transform="rotate(6)" />
      </g>
      <g id="d-banjo">
        <circle r="46" fill="none" stroke="currentColor" stroke-width="7.500" />
        <circle r="37" fill="none" stroke="currentColor" stroke-width="1.800" opacity=".7" />
        <path d="M22-26 136-104" stroke="currentColor" stroke-width="9" />
        <path d="M122-100q6-22 24-22 12 4 6 18-6 14-20 14zM20-44l26 8-6 12-22-6z" />
        <polygon points="30,-30 12,-30 2,-6 10,-4 -34,28 -2,14 18,-2 10,-8" />
      </g>
      <g id="d-cloud">
        <path d="M-24-14A34 34 0 1 0-16 34Q2 56 30 36A32 32 0 1 0 32-15A29 29 0 1 0-24-14z" fill="none" stroke="currentColor" stroke-width="8" />
        <polygon points="-16,20 -9,38 -12,52 -2,54 -3,106 -14,62 -24,58" />
      </g>
      <g id="d-puff">
        <path d="M-24-14A34 34 0 1 0-16 34Q2 56 30 36A32 32 0 1 0 32-15A29 29 0 1 0-24-14z" fill="none" stroke="currentColor" stroke-width="6" transform="scale(.78 .96)" />
        <polygon points="-10,36 -4,38 -2,52 2,54 0,88 -8,56" />
      </g>
      <g id="d-amp" fill="none" stroke="currentColor">
        <path d="M-3-47 45 6 8 47-46-13z" stroke-width="7" stroke-linejoin="round" />
        <circle cx="6" cy="8" r="23" stroke-width="6" /><circle cx="-3" cy="-28" r="5" stroke-width="5" />
        <path d="M26-22 44-44" stroke-width="5.500" /><circle cx="45" cy="-44" r="4" stroke-width="5" />
        <use href="#d-zap" transform="translate(6 9) rotate(14) scale(.5)" fill="currentColor" stroke="none" />
      </g>
      <g id="d-speakerb" fill="none" stroke="currentColor">
        <path d="M1-49 45 21-3 49-45-19z" stroke-width="3.600" />
        <circle cx="6" cy="10" r="23" stroke-width="5" /><circle cx="-25" cy="-14" r="10" stroke-width="4" /><circle cx="-1" cy="-34" r="5" stroke-width="4" />
        <use href="#d-zap" transform="translate(6 10) rotate(-24) scale(.5)" fill="currentColor" stroke="none" />
      </g>
      <g id="d-speaker" fill="none" stroke="currentColor">
        <path d="M-8-48 43-30 13 48-41 31z" stroke-width="3.400" />
        <circle cx="-6" cy="12" r="22" stroke-width="5" /><circle cx="-1" cy="-27" r="9" stroke-width="4" /><circle cx="27" cy="-20" r="5" stroke-width="4" />
        <use href="#d-zap" transform="translate(-6 12) scale(.45)" fill="currentColor" stroke="none" />
      </g>
      <g id="d-phone">
        <rect x="-28" y="-48" width="56" height="96" rx="7" fill="none" stroke="currentColor" stroke-width="4.500" />
        <path d="M-28-48h56v10h-56zM-28 34h22v14h-22zM6 34h22v14H6zM-8 32h16v6H-8z" /><path d="M-8 44H8v4H-8z" />
        <use href="#d-zap" transform="scale(.85)" />
      </g>
      <g id="d-badge">
        <circle r="44" /><circle r="44" fill="none" stroke="currentColor" stroke-width="12" stroke-dasharray="0 13.820" stroke-linecap="round" />
        <g class="cut"><text x="-21" y="12" text-anchor="middle">M</text><text x="21" y="12" text-anchor="middle">M</text><use href="#d-zap" transform="scale(.6)" /></g>
      </g>
      <g id="d-disc"><circle r="48" /><use class="cut" href="#d-zap" transform="rotate(8) scale(.85)" /></g>
      <g id="d-mic">
        <ellipse cy="-34" rx="19" ry="17" fill="none" stroke="currentColor" stroke-width="5" />
        <use href="#d-zap" transform="translate(0 -34) scale(.32)" /><path d="M-9-17H9L4 50H-1z" />
      </g>
      <g id="d-spoon">
        <circle cx="-22" cy="30" r="19" fill="none" stroke="currentColor" stroke-width="5" /><path d="M-12 14 30-48" stroke="currentColor" stroke-width="5" />
      </g>
      <g id="d-sparks">
        <polygon points="-50,-40 -30,-2 -36,0 -20,44 -40,12 -34,8" /><polygon points="-4,-50 6,-4 0,-2 2,40 -8,6 -2,2" />
        <polygon points="46,-40 30,-4 36,0 10,48 22,2 18,0" />
      </g>
      <g id="d-glasses" fill="none" stroke="currentColor" stroke-width="8">
        <circle cx="-62" cy="-8" r="45" /><circle cx="66" cy="14" r="45" /><path d="M-18-14Q0-22 22-4" />
        <use href="#d-zap" transform="translate(66 14) scale(.6)" fill="currentColor" stroke="none" />
      </g>
      <g id="d-swirl">
        <path d="M-50 24C-54-20-32-50 2-50 32-50 46-26 48-2 30-14 8-12-6 6-14 18-20 36-32 40-44 42-50 34-50 24z" />
        <path d="M-2 20C10 4 30 6 42 12 26 18 24 34 10 48-8 44-10 32-2 20z" />
      </g>
      <g id="d-comma">
        <path d="M-20-50C10-50 30-20 32 45 25 22 12 8-8 4-30-2-44-20-40-38-36-47-28-50-20-50z" />
        <path d="M-8 10C10 8 24 20 28 50 15 42-12 42-20 25-20 15-14 10-8 10z" />
      </g>
      <g id="d-helmet">
        <path d="M-30-50C-46-40-46-24-40-10L-29-16C-34-28-36-38-30-50zM4 36C22 44 40 38 50 26 46 48 24 54 2 46z" />
        <path d="M-45 4C-22-28 22-14 14 22L-2 46z" fill="none" stroke="currentColor" stroke-width="6.500" />
        <path d="m-8 16 14-18-2 10 8 0-14 10z" />
      </g>
      <g id="d-hand">
        <path d="M-10 0V-40q6-14 14 0l4 34M-10 0q-20-8-20 10-4 30 20 38h26q14-18 10-46-10-12-18-8M-12 2Q8-2 6 18M18-6l-2 26M-18 22q20-8 16 14M8-6v24" fill="none" stroke="currentColor" stroke-width="5" />
      </g>
      <polygon id="d-zig" points="-13,49 -44,10 -34,0 -50,-24 22,-50 24,-36 36,-24 30,-10 49,30 20,-10 25,-18 14,-34 -38,-14 -24,2 -32,12" />
      <polygon id="d-bolt" points="-9,-50 5,-48 3,-10 10,-8 5,50 -3,6 -12,4" />
      <polygon id="d-tick" points="-50,-50 -20,-5 -10,-20 60,35 -10,25 -25,40" />
    </defs>
  </svg>

  <div class="window">
    <header class="chrome">
      <svg class="theme" width="2880" height="222" viewBox="0 0 2880 222">
        <defs>
          <clipPath id="frame">
            <path d="M0 84H955Q973 84 973 66V34Q973 17 990 17H1435Q1452 17 1452 34V66Q1452 84 1470 84H2880V222H0z" />
          </clipPath>
        </defs>
        <rect width="2880" height="84" fill="#f090ad" /><rect width="2880" height="2" fill="#f3aac1" />
        <path d="M4 83Q16 80 16 66V34Q16 16 34 16H477Q493 16 495 32 497 16 513 16H956Q973 16 973 34V83z" fill="#f2a9bf" />
        <g clip-path="url(#frame)">
          <rect width="2880" height="222" fill="#ec94b3" />
          <polygon v-for="(t, i) in mosaic" :key="i" :points="t.points" :fill="t.fill" opacity=".72" />
        </g>
        <path d="M0 83H955Q973 83 973 66V34Q973 17 990 17H1435Q1452 17 1452 34V66Q1452 83 1470 83H2880" fill="none" stroke="#a3667d" stroke-width="2" />
        <rect y="220" width="2880" height="2" fill="#d59aac" />
      </svg>

      <div class="tabs">
        <div class="tab">
          <svg width="32" height="32"><use href="#i-udemy" /></svg>
          <span class="title fade"><span v-fit="349">The Complete 2023 Web Devel</span></span>
          <svg class="close" width="18" height="18"><use href="#i-close" /></svg>
        </div>
        <div class="tab second">
          <svg width="32" height="32"><use href="#i-github" /></svg>
          <span class="title fade"><span v-fit="347">projects/vocabSite at main · ab</span></span>
          <svg class="close" width="18" height="18"><use href="#i-close" /></svg>
        </div>
        <div class="tab active">
          <svg width="28" height="28"><use href="#i-globe" /></svg>
          <span class="title"><span v-fit="121">Vocab Site</span></span>
          <svg class="close" width="18" height="18"><use href="#i-close" /></svg>
        </div>
        <div class="round plus">
          <svg width="26" height="26" viewBox="0 0 26 26"><path d="M13 2v22M2 13h22" stroke="#414145" stroke-width="3.400" stroke-linecap="round" /></svg>
        </div>
        <div class="round more">
          <svg width="20" height="12" viewBox="0 0 20 12"><path d="m2 2 8 8 8-8" fill="none" stroke="#45454a" stroke-width="3" /></svg>
        </div>
      </div>

      <div class="toolbar">
        <svg class="nav" width="34" height="34" viewBox="0 0 34 34"><path d="M31 17H6M17 5 5 17l12 12" fill="none" stroke="#6a6064" stroke-width="2.800" /></svg>
        <svg class="nav dim" width="34" height="34" viewBox="0 0 34 34"><path d="M3 17h25M17 5l12 12-12 12" fill="none" stroke="#6a6064" stroke-width="2.800" /></svg>
        <svg class="nav" width="34" height="34" viewBox="0 0 34 34">
          <path d="M27.500 22.500A12 12 0 1 1 26 8.500" fill="none" stroke="#6a6064" stroke-width="3" /><path d="M30 4v12H18z" fill="#6a6064" />
        </svg>
        <div class="address">
          <svg width="18" height="22" viewBox="0 0 18 22"><rect y="8" width="18" height="14" rx="2" fill="#55565a" /><path d="M4.500 9V5.500a4.500 4.500 0 0 1 9 0V9" fill="none" stroke="#55565a" stroke-width="2.200" /></svg>
          <span v-fit="710" class="url"><b>abbigailmerrill.github.io</b>/projects/vocabSite/index.html</span>
          <svg class="share" width="24" height="30" viewBox="0 0 24 30">
            <path d="M8 10H4q-3 0-3 3v12q0 3 3 3h16q3 0 3-3V13q0-3-3-3h-4M12 20V2M6.500 7 12 2l5.500 5" fill="none" stroke="#76696f" stroke-width="2.300" />
          </svg>
          <svg width="36" height="36" viewBox="0 0 24 24"><path fill="#6f6369" d="M22 9.240l-7.190-.62L12 2 9.190 8.630 2 9.240l5.460 4.730L5.820 21 12 17.270 18.180 21l-1.630-7.030L22 9.240zM12 15.400l-3.760 2.270 1-4.280-3.320-2.880 4.380-.38L12 6.100l1.710 4.040 4.380.38-3.320 2.880 1 4.280L12 15.400z" /></svg>
        </div>
        <div class="extensions">
          <svg width="32" height="32" viewBox="0 0 32 32">
            <circle cx="16" cy="16" r="16" fill="#54c19d" /><path d="M23 10.500A9 9 0 1 0 24 19h-7M24 17.500V25" fill="none" stroke="#fff" stroke-width="2.400" />
          </svg>
          <svg width="28" height="30" viewBox="0 0 28 30">
            <path d="M1 1h26v20l-8 8H1z" fill="#f2f2f2" stroke="#aaa" /><path d="m27 21-8 8v-7z" fill="#bbb" />
            <text x="14" y="24" text-anchor="middle" class="serif">T</text>
          </svg>
          <svg width="32" height="32" viewBox="0 0 32 32">
            <path d="m2 30 2-7L17 10l5 5L9 28z" fill="#fff" stroke="#26262e" stroke-width="2.200" stroke-linejoin="round" />
            <path d="m15 9 3-1 5-6q4-2 6 1t1 5l-6 6-1 4z" fill="#3c5bd6" stroke="#26262e" stroke-width="2.200" />
          </svg>
          <svg width="32" height="32" viewBox="0 0 24 24"><path fill="#666569" d="M20.500 11H19V7c0-1.100-.9-2-2-2h-4V3.500C13 2.120 11.880 1 10.500 1S8 2.120 8 3.500V5H4c-1.100 0-1.990.9-1.990 2v3.800H3.500c1.490 0 2.700 1.210 2.700 2.700s-1.210 2.700-2.700 2.700H2V20c0 1.100.9 2 2 2h3.800v-1.500c0-1.490 1.210-2.700 2.700-2.700 1.490 0 2.700 1.210 2.700 2.700V22H17c1.100 0 2-.9 2-2v-4h1.500c1.380 0 2.500-1.120 2.500-2.500S21.880 11 20.500 11z" /></svg>
          <svg width="28" height="28" viewBox="0 0 28 28"><path fill="#666569" fill-rule="evenodd" d="M0 0h28v28H0zM4 4v20h14V4z" /></svg>
          <svg width="42" height="46" viewBox="0 0 42 46">
            <circle cx="21" cy="23" r="20" fill="#ee85a8" /><path d="M5 36q16-6 32 0-16 16-32 0z" fill="#f7f4f4" />
            <path d="M36 36q-4-8-1-14 2-5 4-6" fill="none" stroke="#4db4ee" stroke-width="4" /><path d="m37 12 5 2-4 6-3-2z" fill="#171a20" />
            <path d="M4 37q0-10 7-15l4-4h13q7 6 7 20-10 5-18 3z" fill="#1a1d23" /><path d="M17 19h9l1 8-4 10-6-3-3-7z" fill="#dcebf7" />
            <path d="m16 3 5 7h4l5-8 2 11q-1 9-8 9-9 0-9-8z" fill="#4db4ee" /><path d="m24 11 6-9 2 11-5 5zM15 11l6-1-1 8-4-1z" fill="#171a20" />
            <path d="m12 37 12-4-2 8-8 1z" fill="#171a20" /><path d="M31 26q5 5 4 11l-5-1z" fill="#4db4ee" />
          </svg>
          <svg width="8" height="28" viewBox="0 0 8 28"><g fill="#666165"><circle cx="4" cy="4" r="3.200" /><circle cx="4" cy="14" r="3.200" /><circle cx="4" cy="24" r="3.200" /></g></svg>
        </div>
      </div>

      <nav class="bookmarks">
        <div v-for="b in bookmarks" :key="b.label" class="bookmark" :style="{ width: b.width + 'px', gap: b.gap + 'px' }">
          <svg :width="b.size" :height="b.icon === 'linkedin' || b.icon === 'globe' || b.icon === 'flag' ? 28 : 32"><use :href="'#i-' + b.icon" /></svg>
          <span v-fit="b.text">{{ b.label }}</span>
        </div>
      </nav>
    </header>

    <main class="page">
      <svg class="doodles" width="2880" height="1578" viewBox="0 0 2880 1578" aria-hidden="true">
        <use v-for="(d, i) in doodles" :key="i" :href="d.id" :transform="d.transform" />
      </svg>
      <section v-for="(row, r) in rows" :key="r" class="row">
        <article v-for="card in row" :key="card.first" class="card" :style="{ background: card.bg, color: card.fg }">
          <h2 v-fit="card.text" :class="{ long: card.text > 350 }">{{ card.first }} <span class="bar">|</span> {{ card.second }}</h2>
        </article>
      </section>
    </main>
  </div>
</template>

<style>
body { margin: 0; overflow: hidden; }
</style>

<style scoped>
.defs { position: absolute; width: 0; height: 0; }
.window { width: 2880px; height: 1800px; display: flex; flex-direction: column; overflow: hidden; font-family: Inter, Roboto, sans-serif; color: #454347; }
.chrome { position: relative; height: 222px; flex: none; }
.theme { position: absolute; inset: 0; }
.tabs, .toolbar, .bookmarks { position: relative; display: flex; align-items: center; box-sizing: border-box; }
.tabs { height: 84px; padding: 16px 16px 0; }
.tab { display: flex; align-items: center; width: 479px; height: 68px; box-sizing: border-box; padding: 0 22px 0 24px; font-size: 24px; }
.tab.second { width: 478px; padding-left: 23px; }
.tab.second::before { content: ''; width: 2px; height: 40px; margin: 0 -1px 0 -24px; background: #96606f; }
.tab.second svg:first-of-type { margin-left: 23px; }
.tab.active { padding-left: 25px; padding-right: 23px; }
.title { flex: none; width: 350px; margin-left: 17px; overflow: hidden; white-space: nowrap; }
.title span { display: inline-block; }
.title.fade { margin-left: 16px; -webkit-mask-image: linear-gradient(90deg, #000 84%, transparent 100%); mask-image: linear-gradient(90deg, #000 84%, transparent 100%); }
.close { margin-left: auto; flex: none; }
.round { display: flex; align-items: center; justify-content: center; width: 56px; height: 56px; border-radius: 50%; background: #f3abc1; }
.plus { margin-left: 16px; }
.more { margin-left: auto; }
.toolbar { height: 72px; padding-left: 27px; }
.nav { flex: none; margin-right: 30px; }
.nav.dim { opacity: .45; }
.address { display: flex; align-items: center; flex: none; width: 2192px; height: 56px; box-sizing: border-box; margin-left: -3px; padding: 0 18px 0 28px; border-radius: 28px; background: #f7c4d5; }
.url { display: inline-block; margin-left: 22px; font-size: 28px; white-space: nowrap; color: #68585f; }
.url b { font-weight: 400; color: #434145; }
.share { margin-left: auto; margin-right: 34px; }
.extensions { display: grid; grid-template-columns: repeat(7, 64px); align-items: center; justify-items: center; margin-left: 12px; }
.serif { font: 25px 'Liberation Serif', serif; fill: #444; stroke: #444; stroke-width: .5; }
.bookmarks { height: 64px; padding-left: 30px; }
.bookmark { display: flex; align-items: center; flex: none; font-size: 24px; line-height: 28px; white-space: nowrap; }
.bookmark span { padding-bottom: 2px; }
.bookmark svg { flex: none; }
.page { position: relative; flex: 1; box-sizing: border-box; padding: 192px 0 0 72px; background: linear-gradient(19deg, #428377 0%, #3b6d6f 25%, #33586e 50%, #2d4c6b 63%, #2c3f69 82%, #2a2b62 100%); }
.doodles { position: absolute; inset: 0; color: #1f264b; fill: #1f264b; opacity: .8; filter: blur(.8px); }
.cut { fill: #46688c; fill-opacity: .75; font: 700 37px 'Liberation Sans', sans-serif; }
.row { position: relative; display: flex; gap: 50px; }
.row + .row { margin-top: 383px; }
.card { display: flex; align-items: center; justify-content: center; flex: none; width: 406px; height: 406px; box-sizing: border-box; border: 3px solid #000; border-radius: 30px; }
h2 { display: inline-block; margin: 0 0 2px; font: 700 32px 'Liberation Sans', Arial, sans-serif; white-space: nowrap; }
h2.long { font-size: 31px; }
.bar { display: inline-block; transform: translateY(-2px) scaleY(.77); }
</style>
